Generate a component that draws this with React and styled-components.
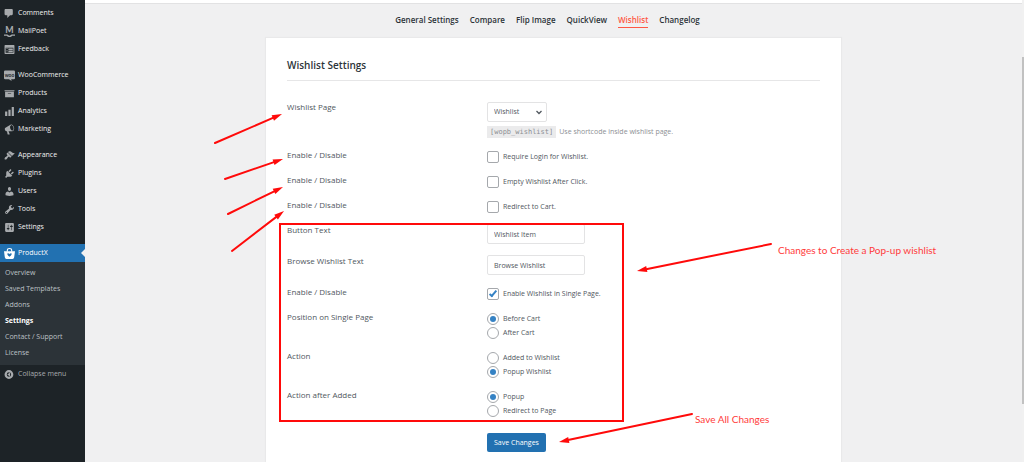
import React from "react";
import styled, { createGlobalStyle, css } from "styled-components";

const red = "#ff0a0a";
const coral = "#ff5845";
const ui = '"Open Sans", "Noto Sans", sans-serif';

const GlobalStyle = createGlobalStyle`
  *, *::before, *::after { box-sizing: border-box; }
  body {
    margin: 0;
    background: #f0f0f1;
    color: #50575e;
    font: 7px/12px ${ui};
    overflow: hidden;
  }
  button, input, select { font: inherit; color: inherit; margin: 0; }
`;

const Page = styled.div`
  display: flex;
  min-height: 100vh;
`;

/* ---------- admin menu ---------- */

const Sidebar = styled.nav`
  flex: 0 0 85px;
  padding-top: 4px;
  background: #1d2327;
`;

const MenuList = styled.ul`
  margin: 0 0 8px;
  padding: 0;
  list-style: none;
`;

const MenuLink = styled.a`
  position: relative;
  display: flex;
  align-items: center;
  gap: 3px;
  height: 18px;
  padding-left: 4px;
  color: ${(p) => (p.$current ? "#fff" : p.$muted ? "#a7aaad" : "#f0f0f1")};
  background: ${(p) => (p.$current ? "#2271b1" : "transparent")};
  font-weight: ${(p) => (p.$muted ? 400 : 500)};
  text-decoration: none;
  white-space: nowrap;
  svg {
    flex: none;
    width: 11px;
    height: 11px;
    overflow: visible;
    fill: ${(p) => (p.$current ? "#fff" : "#a7aaad")};
  }
  ${(p) =>
    p.$current &&
    css`
      &::after {
        content: "";
        position: absolute;
        right: 0;
        top: 5px;
        border: 4px solid transparent;
        border-left: 0;
        border-right-color: #f0f0f1;
      }
    `}
`;

const SubMenu = styled.ul`
  margin: 0;
  padding: 3px 0 4px;
  list-style: none;
  background: #2c3338;
`;

const SubLink = styled.a`
  display: block;
  padding-left: 5px;
  line-height: 16px;
  color: ${(p) => (p.$current ? "#fff" : "#bcc1c6")};
  font-weight: ${(p) => (p.$current ? 700 : 400)};
  text-decoration: none;
`;

/* ---------- main column ---------- */

const Main = styled.main`
  flex: 1;
  min-width: 0;
`;

const TopBar = styled.div`
  height: 4px;
  background: #fff;
  border-bottom: 1px solid #e2e2e3;
`;

const Tabs = styled.nav`
  display: flex;
  justify-content: center;
  gap: 11px;
  height: 34px;
  padding-top: 10px;
  margin-right: 12px;
`;

const Tab = styled.a`
  height: 14px;
  border-bottom: 1px solid ${(p) => (p.$active ? coral : "transparent")};
  color: ${(p) => (p.$active ? coral : "#2c3338")};
  font-size: 8px;
  font-weight: 600;
  text-decoration: none;
`;

const Card = styled.section`
  position: relative;
  max-width: 575px;
  min-height: calc(100vh - 38px);
  margin: 0 auto;
  padding: 20px 21px 10px;
  background: #fff;
  box-shadow: 0 0 1px 1px #e9e9ea;
`;

const Title = styled.h1`
  margin: 0 0 20px;
  padding-bottom: 8px;
  border-bottom: 1px solid #e6e6e7;
  color: #2c3338;
  font-size: 10px;
  line-height: 14px;
  font-weight: 600;
`;

const Form = styled.form`
  display: grid;
  gap: 11px;
`;

const Row = styled.div`
  display: grid;
  grid-template-columns: 200px 1fr;
`;

const RowLabel = styled.label`
  height: 12px;
  font-size: 8px;
`;

const Field = styled.div`
  display: flex;
  flex-direction: column;
  align-items: flex-start;
  gap: ${(p) => (p.$loose ? 4 : 2)}px;
  padding-top: ${(p) => (p.$flush ? 0 : p.$loose ? 1 : 2)}px;
`;

const SelectWrap = styled.span`
  position: relative;
  display: block;
  svg {
    position: absolute;
    right: 5px;
    top: 8px;
    width: 6px;
    height: 5px;
    fill: none;
    stroke: #50575e;
    stroke-width: 1.3;
    pointer-events: none;
  }
`;

const control = css`
  display: block;
  height: 20px;
  padding: 0 6px;
  border: 1px solid #e3e3e4;
  border-radius: 2px;
  background: #fff;
`;

const Select = styled.select`
  ${control}
  width: 60px;
  appearance: none;
`;

const TextInput = styled.input`
  ${control}
  width: 98px;
`;

const Hint = styled.p`
  margin: 0;
  color: #8c8f94;
  white-space: nowrap;
`;

const Code = styled.code`
  display: inline-block;
  margin-right: 3px;
  padding: 0 3px;
  background: #ebebec;
  font: 7px/12px "DejaVu Sans Mono", monospace;
`;

const Option = styled.label`
  display: flex;
  align-items: center;
  gap: 4px;
  height: 12px;
`;

const Tick = styled.input`
  appearance: none;
  display: grid;
  place-items: center;
  width: 12px;
  height: 12px;
  border: 1px solid #a5a8ac;
  border-radius: ${(p) => (p.type === "radio" ? "50%" : "2px")};
  background: #fff;
  &[type="radio"]:checked::before {
    content: "";
    width: 6px;
    height: 6px;
    border-radius: 50%;
    background: #3582c4;
  }
  &[type="checkbox"]:checked::before {
    content: "";
    width: 4px;
    height: 8px;
    margin-bottom: 2px;
    border: solid #3582c4;
    border-width: 0 2px 2px 0;
    transform: rotate(40deg);
  }
`;

const SaveButton = styled.button`
  justify-self: start;
  height: 19px;
  margin: 5px 0 0 200px;
  padding: 0 7px;
  border: 0;
  border-radius: 2px;
  background: #2271b1;
  color: #fff;
  font-weight: 500;
`;

const ScrollTrack = styled.div`
  flex: 0 0 2px;
  padding: 57px 0 58px;
  background: #f1f1f1;
`;

const ScrollThumb = styled.div`
  height: 100%;
  background: #c1c1c1;
`;

/* ---------- annotations over the card ---------- */

const Marks = styled.svg`
  position: absolute;
  left: 0;
  top: 0;
  width: 575px;
  height: 424px;
  overflow: visible;
  pointer-events: none;
  fill: none;
  stroke: ${red};
  stroke-width: 2;
  stroke-linecap: round;
`;

const Note = styled.div`
  position: absolute;
  left: ${(p) => p.$x}px;
  top: ${(p) => p.$y}px;
  color: #ff3b3b;
  font: 10px/14px Lato, sans-serif;
  white-space: nowrap;
`;

const icons = {
  comments: <path d="M3 2h11c1.100 0 2 .9 2 2v7c0 1.100-.9 2-2 2h-3l-5 5v-5H3c-1.100 0-2-.9-2-2V4c0-1.100.9-2 2-2z" />,
  mailpoet: (
    <>
      <text x="10" y="13" textAnchor="middle" fontSize="16" fontWeight="900" fontFamily="Lato">M</text>
      <path d="M0 15.500h6c1 0 2 2 4 2s3-2 4-2h6v2h-5c-1 1-3 2.500-5 2.500s-4-1.500-5-2.500H0z" />
    </>
  ),
  feedback: <path d="M2 2h16c.55 0 1 .45 1 1v14c0 .55-.45 1-1 1H2c-.55 0-1-.45-1-1V3c0-.55.45-1 1-1zm15 14V7H3v9h14zM4 8v1h3V8H4zm4 0v3h8V8H8zm-4 4v1h3v-1H4zm4 0v3h8v-3H8z" />,
  woo: (
    <>
      <path d="M2 1h16q2 0 2 2v12q0 2-2 2h-5l1 3-5-3H2q-2 0-2-2V3q0-2 2-2z" />
      <text x="10" y="12" textAnchor="middle" fontSize="9" fontWeight="700" fontFamily="Lato" fill="#1d2327">woo</text>
    </>
  ),
  products: <path d="M19 4v2H1V4h18zM2 7h16v10H2V7zm11 3V9H7v1h6z" />,
  analytics: <path d="M18 18V2h-4v16h4zm-6 0V7H8v11h4zm-6 0v-8H2v8h4z" />,
  marketing: <path d="M18.150 5.940c.46 1.620.38 3.220-.02 4.480-.42 1.280-1.260 2.180-2.300 2.480-.16.06-.26.06-.4.06-.06.02-.12.02-.18.02-.06.02-.14.02-.22.02h-6.800l2.220 5.500c.02.14-.06.26-.14.34-.08.1-.24.16-.34.16H6.950c-.1 0-.26-.06-.34-.16-.08-.08-.16-.2-.14-.34l-1-5.500H4.250l-.02-.02c-.5.06-1.080-.18-1.540-.62s-.88-1.080-1.060-1.880c-.24-.8-.2-1.560-.02-2.200.18-.62.58-1.080 1.060-1.300l.02-.02 9-5.400c.1-.06.18-.1.24-.16.06-.04.14-.08.24-.12.16-.08.28-.12.5-.18 1.040-.3 2.240.1 3.220.98s1.840 2.240 2.260 3.860zm-2.580 5.980h-.02c.4-.1.74-.34 1.040-.7.58-.7.86-1.760.86-3.040 0-.64-.1-1.300-.28-1.980-.34-1.360-1.020-2.500-1.780-3.240s-1.680-1.100-2.460-.88c-.82.22-1.400.96-1.700 2-.32 1.040-.28 2.360.06 3.720.38 1.360 1 2.500 1.800 3.240.78.74 1.620 1.100 2.480.88z" />,
  appearance: <path d="M14.480 11.060L7.410 3.990l1.500-1.500c.5-.56 2.300-.47 3.510.32 1.210.8 1.430 1.280 2.910 2.100 1.180.64 2.450 1.260 4.450.85zm-.71.71L6.700 4.700 4.930 6.470c-.39.39-.39 1.020 0 1.410l1.060 1.060c.39.39.39 1.030 0 1.420-.6.6-1.430 1.110-2.210 1.690-.35.26-.7.53-1.010.84C1.430 14.230.4 16.080 1.400 17.070c.99 1 2.840-.03 4.180-1.360.31-.31.58-.66.85-1.020.57-.78 1.080-1.610 1.690-2.210.39-.39 1.020-.39 1.410 0l1.060 1.060c.39.39 1.020.39 1.410 0z" />,
  plugins: <path d="M13.110 4.360L9.870 7.600 8 5.730l3.240-3.240c.35-.34 1.050-.2 1.560.32.52.51.66 1.210.31 1.550zm-8 1.770l.91-1.120 9.010 9.010-1.190.84c-.71.71-2.630 1.160-3.820 1.160H6.140L4.900 17.260c-.59.59-1.540.59-2.120 0-.59-.58-.59-1.530 0-2.120l1.240-1.240v-3.880c0-1.130.4-3.190 1.090-3.890zm7.260 3.970l3.240-3.240c.34-.35 1.040-.21 1.550.31.52.51.66 1.210.31 1.550l-3.240 3.250z" />,
  users: <path d="M10 9.250c-2.270 0-2.730-3.440-2.730-3.440C7 4.020 7.820 2 9.970 2c2.160 0 2.980 2.020 2.710 3.810 0 0-.41 3.440-2.680 3.440zm0 2.570L12.720 10c2.390 0 4.520 2.330 4.520 4.530v2.490s-3.650 1.130-7.240 1.130c-3.650 0-7.240-1.130-7.240-1.130v-2.490c0-2.250 1.940-4.480 4.470-4.480z" />,
  tools: <path d="M16.680 9.770c-1.340 1.340-3.300 1.670-4.950.99l-5.410 6.520c-.99.99-2.590.99-3.580 0s-.99-2.590 0-3.570l6.520-5.420c-.68-1.650-.35-3.610.99-4.950 1.280-1.280 3.120-1.620 4.720-1.060l-2.890 2.890 2.820 2.820 2.860-2.870c.53 1.580.18 3.390-1.080 4.650zM3.810 16.210c.4.39 1.040.39 1.430 0 .4-.4.4-1.040 0-1.430-.39-.4-1.030-.4-1.430 0-.39.39-.39 1.030 0 1.430z" />,
  settings: <path d="M18 16V4c0-1.100-.9-2-2-2H4c-1.100 0-2 .9-2 2v12c0 1.100.9 2 2 2h12c1.100 0 2-.9 2-2zM8 11h1c.55 0 1 .45 1 1s-.45 1-1 1H8v1.500c0 .28-.22.5-.5.5s-.5-.22-.5-.5V13H6c-.55 0-1-.45-1-1s.45-1 1-1h1V5.500c0-.28.22-.5.5-.5s.5.22.5.5V11zm5-2h-1c-.55 0-1-.45-1-1s.45-1 1-1h1V5.500c0-.28.22-.5.5-.5s.5.22.5.5V7h1c.55 0 1 .45 1 1s-.45 1-1 1h-1v5.500c0 .28-.22.5-.5.5s-.5-.22-.5-.5V9z" />,
  productx: (
    <>
      <path d="M6 7V4.500Q6 1 10 1t4 3.500V7" fill="none" stroke="#fff" strokeWidth="2" />
      <path d="M0 6h20l-1.500 11q-.4 3-3 3h-11q-2.600 0-3-3z" />
      <path d="M6 10q2-1 4 1 2-2 4-1 0 4-4 6-4-2-4-6z" fill="#2271b1" />
    </>
  ),
  collapse: (
    <path fillRule="evenodd" d="M9 2a8 8 0 1 0 0 16A8 8 0 0 0 9 2zm0 4a4 4 0 1 1 0 8 4 4 0 0 1 0-8zM11 6.500v7L6 10z" />
  ),
};

const Icon = ({ name }) => (
  <svg viewBox="0 0 20 20" aria-hidden="true">{icons[name]}</svg>
);

const groups = [
  [["comments", "Comments"], ["mailpoet", "MailPoet"], ["feedback", "Feedback"]],
  [["woo", "WooCommerce"], ["products", "Products"], ["analytics", "Analytics"], ["marketing", "Marketing"]],
  [["appearance", "Appearance"], ["plugins", "Plugins"], ["users", "Users"], ["tools", "Tools"], ["settings", "Settings"]],
];

const subItems = ["Overview", "Saved Templates", "Addons", "Settings", "Contact / Support", "License"];
const tabs = ["General Settings", "Compare", "Flip Image", "QuickView", "Wishlist", "Changelog"];

const arrows = [
  [215, 143, 282, 114],
  [225, 179, 283, 159],
  [228, 214, 283, 187],
  [232, 251, 284, 211],
  [771, 244, 637, 271],
  [692, 414, 559, 442],
];

function Arrow({ x1, y1, x2, y2 }) {
  const angle = (Math.atan2(y2 - y1, x2 - x1) * 180) / Math.PI;
  const length = Math.hypot(x2 - x1, y2 - y1);
  return (
    <g transform={`translate(${x1} ${y1}) rotate(${angle})`}>
      <path d={`M0 0H${length - 8}`} />
      <path d={`M${length} 0l-10 -3v6z`} fill={red} stroke="none" />
    </g>
  );
}

const Check = ({ id, text, checked }) => (
  <Row>
    <RowLabel htmlFor={id}>Enable / Disable</RowLabel>
    <Field>
      <Option>
        <Tick type="checkbox" id={id} defaultChecked={checked} />
        {text}
      </Option>
    </Field>
  </Row>
);

const Text = ({ id, label, value }) => (
  <Row>
    <RowLabel htmlFor={id}>{label}</RowLabel>
    <Field $flush>
      <TextInput id={id} type="text" defaultValue={value} />
    </Field>
  </Row>
);

const Radios = ({ name, label, options, selected }) => (
  <Row role="radiogroup" aria-labelledby={`${name}-label`}>
    <RowLabel as="span" id={`${name}-label`}>{label}</RowLabel>
    <Field>
      {options.map((o) => (
        <Option key={o}>
          <Tick type="radio" name={name} defaultChecked={o === selected} />
          {o}
        </Option>
      ))}
    </Field>
  </Row>
);

export default function App() {
  return (
    <Page>
      <GlobalStyle />
      <Sidebar>
        {groups.map((items, i) => (
          <MenuList key={i}>
            {items.map(([icon, label]) => (
              <li key={label}>
                <MenuLink href="#"><Icon name={icon} />{label}</MenuLink>
              </li>
            ))}
          </MenuList>
        ))}
        <MenuLink href="#" $current><Icon name="productx" />ProductX</MenuLink>
        <SubMenu>
          {subItems.map((s) => (
            <li key={s}><SubLink href="#" $current={s === "Settings"}>{s}</SubLink></li>
          ))}
        </SubMenu>
        <MenuLink href="#" $muted><Icon name="collapse" />Collapse menu</MenuLink>
      </Sidebar>

      <Main>
        <TopBar />
        <Tabs>
          {tabs.map((t) => (
            <Tab key={t} href="#" $active={t === "Wishlist"}>{t}</Tab>
          ))}
        </Tabs>
        <Card>
          <Title>Wishlist Settings</Title>
          <Form onSubmit={(e) => e.preventDefault()}>
            <Row>
              <RowLabel htmlFor="page">Wishlist Page</RowLabel>
              <Field $loose>
                <SelectWrap>
                  <Select id="page"><option>Wishlist</option></Select>
                  <svg viewBox="0 0 6 5" aria-hidden="true"><path d="M.5 1L3 3.500 5.500 1" /></svg>
                </SelectWrap>
                <Hint><Code>[wopb_wishlist]</Code>Use shortcode inside wishlist page.</Hint>
              </Field>
            </Row>
            <Check id="login" text="Require Login for Wishlist." />
            <Check id="empty" text="Empty Wishlist After Click." />
            <Check id="redirect" text="Redirect to Cart." />
            <Text id="button-text" label="Button Text" value="Wishlist Item" />
            <Text id="browse-text" label="Browse Wishlist Text" value="Browse Wishlist" />
            <Check id="single" text="Enable Wishlist in Single Page." checked />
            <Radios name="position" label="Position on Single Page" options={["Before Cart", "After Cart"]} selected="Before Cart" />
            <Radios name="action" label="Action" options={["Added to Wishlist", "Popup Wishlist"]} selected="Popup Wishlist" />
            <Radios name="after" label="Action after Added" options={["Popup", "Redirect to Page"]} selected="Popup" />
            <SaveButton type="submit">Save Changes</SaveButton>
          </Form>

          <Marks viewBox="266 38 575 424" aria-hidden="true">
            <rect x="280" y="224" width="343" height="197" strokeLinecap="butt" />
            {arrows.map(([x1, y1, x2, y2]) => (
              <Arrow key={y1} x1={x1} y1={y1} x2={x2} y2={y2} />
            ))}
          </Marks>
          <Note $x={512} $y={205}>Changes to Create a Pop-up wishlist</Note>
          <Note $x={429} $y={374}>Save All Changes</Note>
        </Card>
      </Main>
      <ScrollTrack><ScrollThumb /></ScrollTrack>
    </Page>
  );
}
